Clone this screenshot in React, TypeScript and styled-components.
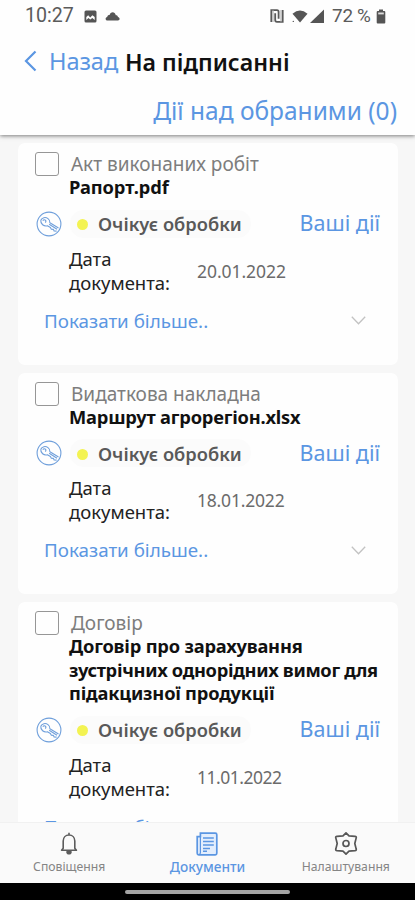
import React from 'react';
import styled, { createGlobalStyle } from 'styled-components';

const blue = '#5b96e2';

const GlobalStyle = createGlobalStyle`
  * { box-sizing: border-box; }
  body { margin: 0; background: #000; font-family: "Noto Sans", sans-serif; }
`;

const Screen = styled.div`
  width: 415px;
  height: 900px;
  display: flex;
  flex-direction: column;
  overflow: hidden;
  background: #f7f7f7;
`;

const Header = styled.header`
  position: relative;
  z-index: 1;
  height: 135px;
  flex: none;
  background: #fefefe;
  box-shadow: 0 1px 4px rgba(0, 0, 0, 0.5);
`;

const StatusBar = styled.div`
  height: 32px;
  padding: 0 29px 0 25px;
  display: flex;
  align-items: center;
  justify-content: space-between;
  color: #5b5b5b;
  font: 400 19.6px/32px Roboto, sans-serif;
`;

const StatusGroup = styled.div`
  display: flex;
  align-items: center;

  svg { display: block; flex: none; }
`;

const Clock = styled.span`
  width: 59px;
`;

const Gap = styled.span`
  width: 8px;
`;

const Battery = styled.span`
  width: 44px;
  margin-left: 8px;
  font-size: 18.9px;
  white-space: nowrap;
  word-spacing: -1px;
`;

const TitleBar = styled.div`
  height: 56px;
  padding-left: 24px;
  display: flex;
  align-items: center;
  white-space: nowrap;
`;

const BackButton = styled.button`
  width: 101px;
  padding: 1px 0 0;
  border: 0;
  background: none;
  display: flex;
  align-items: center;
  gap: 12px;
  color: ${blue};
  font: 400 23.6px/32px "Noto Sans", sans-serif;
  letter-spacing: -0.1px;

  svg { flex: none; }
`;

const PageTitle = styled.h1`
  margin: 3px 0 0;
  color: #111;
  font-size: 23.2px;
  font-weight: 600;
  line-height: 32px;
`;

const BulkActions = styled.div`
  padding-right: 18px;
  text-align: right;
  color: ${blue};
  font-size: 24.5px;
  line-height: 46px;
`;

const DocumentList = styled.main`
  flex: 1;
  min-height: 0;
  overflow: hidden;
  padding: 8px 17px 0 18px;
  display: flex;
  flex-direction: column;
  gap: 8px;
`;

const Card = styled.article`
  flex: none;
  padding: 9px 18px 0 17px;
  min-height: 221.5px;
  border-radius: 7px;
  background: #fefefe;
`;

const CardHead = styled.div`
  display: grid;
  grid-template-columns: 24px 1fr;
  column-gap: 11px;
`;

const Checkbox = styled.span`
  width: 24px;
  height: 24px;
  border: 1.5px solid #969696;
  border-radius: 3px;
`;

const Category = styled.div`
  padding-left: 1px;
  color: #7d7d7d;
  font-size: 19px;
  line-height: 24px;
`;

const FileName = styled.h2`
  grid-column: 2;
  margin: -1px -8px 1px -1px;
  color: #111;
  font-size: 18.3px;
  font-weight: 700;
  line-height: 23.6px;
`;

const NameLine = styled.span<{ $spacing: number }>`
  display: block;
  letter-spacing: ${({ $spacing }) => $spacing}px;
`;

const StatusRow = styled.div`
  height: 30px;
  margin-top: 9px;
  padding-left: 1px;
  display: flex;
  align-items: center;
  justify-content: space-between;
`;

const StatusInfo = styled.div`
  display: flex;
  align-items: center;
  gap: 8px;
`;

const StatusChip = styled.div`
  height: 28px;
  padding: 0 9px 0 7px;
  border-radius: 14px;
  background: #fbfbfb;
  display: flex;
  align-items: center;
  gap: 10px;
  color: #595959;
  font-size: 18.3px;
  font-weight: 600;
  white-space: nowrap;
`;

const Dot = styled.i`
  width: 11px;
  height: 11px;
  margin-top: 2px;
  border-radius: 50%;
  background: #f3f352;
`;

const YourActions = styled.span`
  margin-top: -1px;
  color: ${blue};
  font-size: 21.5px;
  line-height: 28px;
  white-space: nowrap;
`;

const DateRow = styled.div`
  margin-top: 8px;
  padding-left: 34px;
  display: grid;
  grid-template-columns: 128px 1fr;
  align-items: center;
`;

const DateLabel = styled.div`
  width: 104px;
  color: #222;
  font-size: 18.5px;
  line-height: 24px;
`;

const DateValue = styled.div<{ $spacing: number }>`
  color: #6b6b6b;
  font-size: 17.5px;
  letter-spacing: ${({ $spacing }) => $spacing}px;
`;

const MoreRow = styled.div`
  height: 26px;
  margin-top: 13px;
  padding: 0 14px 0 9px;
  display: flex;
  align-items: center;
  justify-content: space-between;
  color: ${blue};
  font-size: 18.8px;
`;

const TabBar = styled.nav`
  position: relative;
  z-index: 1;
  height: 61px;
  flex: none;
  padding-top: 9px;
  background: #fafafa;
  border-top: 1px solid #f1f1f1;
  display: grid;
  grid-template-columns: repeat(3, 1fr);
`;

const Tab = styled.div<{ $active?: boolean }>`
  display: flex;
  flex-direction: column;
  align-items: center;
  color: ${({ $active }) => ($active ? blue : '#858585')};
  font-size: ${({ $active }) => ($active ? '13.7px' : '12.2px')};
  font-weight: ${({ $active }) => ($active ? 500 : 400)};
  line-height: 18px;

  svg { display: block; margin-bottom: ${({ $active }) => ($active ? 2 : 3)}px; }
`;

const GestureArea = styled.footer`
  height: 17px;
  flex: none;
  padding-top: 7px;
  display: flex;
  justify-content: center;
  background: #000;
`;

const GestureHandle = styled.div`
  width: 165px;
  height: 4px;
  border-radius: 2px;
  background: #a4a4a4;
`;

const PictureIcon = () => (
  <svg width="13" height="13" viewBox="0 0 13 13">
    <rect x="0.5" y="0.5" width="12" height="12" rx="1.5" fill="#555" />
    <path d="M2.3 10V7l1.9-1.8 2 2.2 2.2-2.1L10.7 7v3l-2.4-2-2 1.4-1.8-1.5z" fill="#fff" />
  </svg>
);

const CloudIcon = () => (
  <svg width="15" height="10" viewBox="0 0 15 10">
    <path d="M2.5 9.5C.3 9.5-.2 6.4 2.2 6 2.4 4.5 3.6 4 4.6 4.1 5.4.3 10 .2 10.8 4.2c1.5 0 2 .7 2.1 1.7 2.3.3 2.2 3.6 0 3.6z" fill="#555" />
  </svg>
);

const NfcIcon = () => (
  <svg width="14" height="14" viewBox="0 0 14 14" fill="none" stroke="#5a5a5a" strokeWidth="1.8">
    <path d="M1.3 13V1.2H7Q8.6 1.2 8.6 2.8V9.7M12.7 1V12.8H7Q5.2 12.8 5.2 11V4.2" />
    <path d="M3 1v12M11 1v12" stroke="#aaa" strokeWidth="1" />
  </svg>
);

const SignalIcons = () => (
  <svg width="32" height="15" viewBox="0 0 32 15" fill="#555">
    <path d="M.5 4.7Q8 -1.7 15.5 4.7L8 13.4z" />
    <path d="M32 .5V14H18z" />
    <circle cx="1.3" cy="12.4" r="0.7" />
  </svg>
);

const BatteryIcon = () => (
  <svg width="10" height="15" viewBox="0 0 10 15">
    <path d="M3 .5h4V2h1.3q1 0 1 1v10.5q0 1-1 1H1.7q-1 0-1-1V3q0-1 1-1H3z" fill="#555" />
    <path d="M2.2 3.5h5.6v1.9H2.2z" fill="#ddd" />
  </svg>
);

const BackIcon = () => (
  <svg width="13" height="22" viewBox="0 0 13 22" fill="none" stroke="currentColor" strokeWidth="2.2">
    <path d="M11.5 1.5 2 11l9.5 9.5" />
  </svg>
);

const KeyIcon = () => (
  <svg width="26" height="26" viewBox="0 0 26 26" fill="none" stroke="#6f9fdb" strokeWidth="1.1" strokeLinejoin="round">
    <circle cx="13" cy="13" r="11.9" />
    <path d="M4.8 9.3C6 6.4 9.5 5.8 12 7.6c1.6 1.2 2 2.8 1.9 4.2l8.6 5.2M4.8 9.3c-.4 3.6 3 6.4 6.6 5.5l3 1.7.8 1.6 2.2.3.7 1.6 2.5.1" />
    <path d="M6.8 9.6c.8-1.2 2.2-1.2 3 0 .3.8 0 1.6-.7 2M13.2 13.3l7.8 4.9" />
  </svg>
);

const ChevronIcon = () => (
  <svg width="15" height="9" viewBox="0 0 15 9" fill="none" stroke="#c2c2c2" strokeWidth="1.3">
    <path d="m.8.8 6.7 7 6.7-7" />
  </svg>
);

const BellIcon = () => (
  <svg width="18" height="23" viewBox="0 0 18 23" fill="none" stroke="#5c5c5c" strokeWidth="1.6" strokeLinejoin="round">
    <path d="M3.2 16.3V9C3.2 5.6 5.6 3 9 3s5.8 2.6 5.8 6v7.3l1.6 2H1.6zM9 .8v2.4" />
    <path d="M7 19.7a2 2 0 0 0 4 0z" fill="#5c5c5c" />
  </svg>
);

const DocumentIcon = () => (
  <svg width="22" height="24" viewBox="0 0 22 24" fill="none" stroke={blue} strokeWidth="1.7">
    <path d="M4.4 1.2h14.9q1.5 0 1.5 1.5v18.6q0 1.5-1.5 1.5H2.7q-1.5 0-1.5-1.5V4.6h3.2z" fill="#e3eefd" />
    <path d="M4.4 4.6v16.2q0 1.4-1.4 1.8" strokeWidth="1.2" />
    <path d="M7 6h10.8M7 9.6h10.8M7 13.1h10.8M7 16.6h7M7 19.3h4" strokeWidth="1.5" />
  </svg>
);

const GearIcon = () => (
  <svg width="24" height="23" viewBox="0 0 24 23" fill="none" stroke="#575757" strokeWidth="1.7" strokeLinejoin="round">
    <path d="m12 .9 3 3 6 .4q1.6.2 1.2 1.6l-1.4 5.6 1.4 5.6q.4 1.4-1.2 1.6l-6 .4-3 3-3-3-6-.4q-1.6-.2-1.2-1.6l1.4-5.6-1.4-5.6Q1.400 4.500 3 4.300l6-.4z" />
    <circle cx="12" cy="11.5" r="3" />
  </svg>
);

type DocumentItem = {
  category: string;
  name: { text: string; spacing: number }[];
  date: string;
  dateSpacing: number;
};

const documents: DocumentItem[] = [
  {
    category: 'Акт виконаних робіт',
    name: [{ text: 'Рапорт.pdf', spacing: -0.05 }],
    date: '20.01.2022',
    dateSpacing: -0.05,
  },
  {
    category: 'Видаткова накладна',
    name: [{ text: 'Маршрут агрорегіон.xlsx', spacing: -0.2 }],
    date: '18.01.2022',
    dateSpacing: -0.2,
  },
  {
    category: 'Договір',
    name: [
      { text: 'Договір про зарахування', spacing: -0.2 },
      { text: 'зустрічних однорідних вимог для', spacing: -0.33 },
      { text: 'підакцизної продукції', spacing: -0.2 },
    ],
    date: '11.01.2022',
    dateSpacing: -0.5,
  },
];

const DocumentCard = ({ category, name, date, dateSpacing }: DocumentItem) => (
  <Card>
    <CardHead>
      <Checkbox />
      <Category>{category}</Category>
      <FileName>
        {name.map(({ text, spacing }) => (
          <NameLine key={text} $spacing={spacing}>{text}</NameLine>
        ))}
      </FileName>
    </CardHead>
    <StatusRow>
      <StatusInfo>
        <KeyIcon />
        <StatusChip><Dot />Очікує обробки</StatusChip>
      </StatusInfo>
      <YourActions>Ваші дії</YourActions>
    </StatusRow>
    <DateRow>
      <DateLabel>Дата документа:</DateLabel>
      <DateValue $spacing={dateSpacing}>{date}</DateValue>
    </DateRow>
    <MoreRow>
      <span>Показати більше..</span>
      <ChevronIcon />
    </MoreRow>
  </Card>
);

export default function App() {
  return (
    <>
      <GlobalStyle />
      <Screen>
        <Header>
          <StatusBar>
            <StatusGroup>
              <Clock>10:27</Clock>
              <PictureIcon />
              <Gap />
              <CloudIcon />
            </StatusGroup>
            <StatusGroup>
              <NfcIcon />
              <Gap />
              <SignalIcons />
              <Battery>72 %</Battery>
              <BatteryIcon />
            </StatusGroup>
          </StatusBar>
          <TitleBar>
            <BackButton><BackIcon />Назад</BackButton>
            <PageTitle>На підписанні</PageTitle>
          </TitleBar>
          <BulkActions>Дії над обраними (0)</BulkActions>
        </Header>
        <DocumentList>
          {documents.map((doc) => <DocumentCard key={doc.category} {...doc} />)}
        </DocumentList>
        <TabBar>
          <Tab><BellIcon />Сповіщення</Tab>
          <Tab $active><DocumentIcon />Документи</Tab>
          <Tab><GearIcon />Налаштування</Tab>
        </TabBar>
        <GestureArea><GestureHandle /></GestureArea>
      </Screen>
    </>
  );
}
